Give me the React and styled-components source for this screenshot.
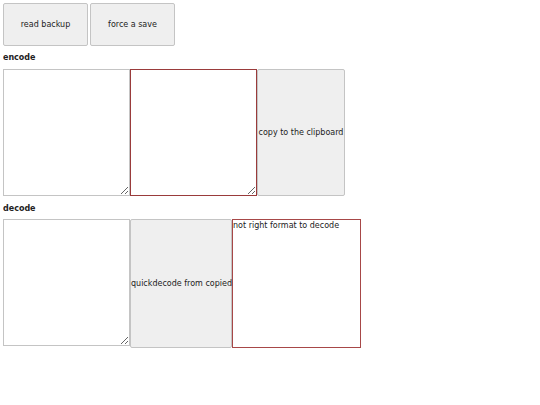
import styled, { createGlobalStyle } from "styled-components";

const GlobalStyle = createGlobalStyle`
  body {
    margin: 3px;
    font-family: "DejaVu Sans", sans-serif;
    font-size: 8px;
    color: #222;
    background: #fff;
  }
`;

const Toolbar = styled.div`
  display: flex;
  gap: 2px;
`;

const Button = styled.button`
  box-sizing: border-box;
  width: ${(props) => props.w}px;
  height: ${(props) => props.h}px;
  padding: 0;
  white-space: nowrap;
  font-family: inherit;
  font-size: 8px;
  color: #222;
  background: #efefef;
  border: 1px solid #c4c4c4;
  border-radius: 2px;
`;

const Label = styled.div`
  font-weight: bold;
  font-size: 8px;
  line-height: 10px;
  margin: ${(props) => props.top}px 0 ${(props) => props.bottom}px;
`;

const Row = styled.div`
  display: flex;
  align-items: flex-start;
`;

const Area = styled.textarea`
  box-sizing: border-box;
  width: 127px;
  height: 127px;
  margin: 0;
  padding: 0;
  resize: both;
  font-family: inherit;
  font-size: 8px;
  border: 1px solid ${(props) => (props.bad ? "#9a3b3b" : "#c4c4c4")};
  outline: none;
`;

const Output = styled.div`
  box-sizing: border-box;
  width: 129px;
  height: 129px;
  border: 1px solid #a74848;
  line-height: 11px;
`;

const App = () => {
  return (
    <>
      <GlobalStyle />
      <Toolbar>
        <Button w={85} h={43}>read backup</Button>
        <Button w={85} h={43}>force a save</Button>
      </Toolbar>
      <Label top={7} bottom={6}>encode</Label>
      <Row>
        <Area />
        <Area bad />
        <Button w={88} h={127}>copy to the clipboard</Button>
      </Row>
      <Label top={8} bottom={5}>decode</Label>
      <Row>
        <Area />
        <Button w={102} h={129}>quickdecode from copied</Button>
        <Output>not right format to decode</Output>
      </Row>
    </>
  );
};

export default App;
